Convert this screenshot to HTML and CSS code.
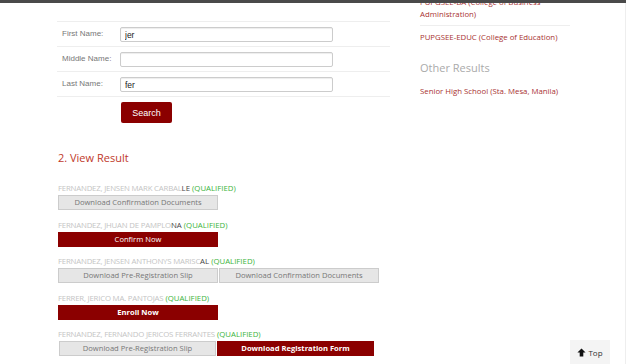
FILE: index.html
```html
<!Doctype html>
<html lang='en'>
<head>
    <meta charset='utf-8'>
    <meta name='viewport' content='width=device-width, initial-scale=1'>
    <title>Search Result</title>
    <link rel="stylesheet" href="styles.css">
</head>
<body>
    <div class='topbar'></div>
    <div class='page'>
        <div class='main'>
            <table class='search-form'>
                <tr>
                    <td class='label'>First Name:</td>
                    <td><input class='field' value='jer'/></td>
                </tr>
                <tr>
                    <td class='label'>Middle Name:</td>
                    <td><input class='field' value=''/></td>
                </tr>
                <tr>
                    <td class='label'>Last Name:</td>
                    <td><input class='field' value='fer'/></td>
                </tr>
                <tr>
                    <td></td>
                    <td><button class='search-btn'>Search</button></td>
                </tr>
            </table>

            <h3 class='step'>2. View Result</h3>

            <div class='result'>
                <div class='name'><span class='blur'>FERNANDEZ, JENSEN MARK CARBAL</span><span class='tail'>LE</span> <span class='ok'>(QUALIFIED)</span></div>
                <div class='actions'>
                    <a class='btn gray'>Download Confirmation Documents</a>
                </div>
            </div>
            <div class='result'>
                <div class='name'><span class='blur'>FERNANDEZ, JHUAN DE PAMPLO</span><span class='tail'>NA</span> <span class='ok'>(QUALIFIED)</span></div>
                <div class='actions'>
                    <a class='btn red'>Confirm Now</a>
                </div>
            </div>
            <div class='result'>
                <div class='name'><span class='blur'>FERNANDEZ, JENSEN ANTHONYS MARISC</span><span class='tail'>AL</span> <span class='ok'>(QUALIFIED)</span></div>
                <div class='actions'>
                    <a class='btn gray'>Download Pre-Registration Slip</a>
                    <a class='btn gray'>Download Confirmation Documents</a>
                </div>
            </div>
            <div class='result'>
                <div class='name'><span class='blur'>FERRER, JERICO MA. PANTOJAS</span> <span class='ok'>(QUALIFIED)</span></div>
                <div class='actions'>
                    <a class='btn red bold'>Enroll Now</a>
                </div>
            </div>
            <div class='result'>
                <div class='name'><span class='blur'>FERNANDEZ, FERNANDO JERICOS FERRANTES</span> <span class='ok'>(QUALIFIED)</span></div>
                <div class='actions'>
                    <a class='btn gray narrow'>Download Pre-Registration Slip</a>
                    <a class='btn red bold narrow'>Download Registration Form</a>
                </div>
            </div>
        </div>

        <div class='side'>
            <ul class='links'>
                <li><a>PUPGSEE-BA (College of Business Administration)</a></li>
                <li><a>PUPGSEE-EDUC (College of Education)</a></li>
            </ul>
            <h4 class='side-title'>Other Results</h4>
            <ul class='links plain'>
                <li><a>Senior High School (Sta. Mesa, Manila)</a></li>
            </ul>
        </div>
    </div>

    <a class='to-top'>
        <svg width='9' height='9' viewBox='0 0 10 10'><path d='M5 0.5 L9.5 5 L7 5 L7 9.5 L3 9.5 L3 5 L0.5 5 Z' fill='#111'/></svg>
        Top
    </a>
</body>
</html>
```
FILE: styles.css
```css
html,
body {
    margin: 0;
    font-family: "Open Sans", "Noto Sans", sans-serif;
    background-color: #ffffff;
    color: #333333;
}

/* fixed header edge */
.topbar {
    position: fixed;
    top: 0;
    left: 0;
    right: 0;
    height: 3px;
    background-color: #4a4a4a;
    z-index: 10;
}

.page {
    display: flex;
    gap: 30px;
    padding-left: 57px;
    margin-top: -5px;
    border-right: 1px solid #eeeeee;
    min-height: 369px;
    box-sizing: border-box;
}

.main {
    width: 333px;
    padding-top: 26px;
}

.search-form {
    width: 100%;
    border-collapse: collapse;
}
.search-form td {
    border-top: 1px solid #eeeeee;
    padding: 5px 0 4px 0;
    height: 15px;
    vertical-align: top;
}
.search-form tr:last-child td {
    padding-top: 5px;
    padding-bottom: 0;
}
.search-form .label {
    width: 58px;
    padding-left: 5px;
    font-family: "Liberation Sans", Arial, sans-serif;
    font-size: 8px;
    color: #777777;
    line-height: 14px;
}
.field {
    display: block;
    width: 213px;
    height: 15px;
    box-sizing: border-box;
    border: 1px solid #cccccc;
    border-radius: 2px;
    padding: 0 4px;
    font-family: "Liberation Sans", Arial, sans-serif;
    font-size: 8.5px;
    color: #222222;
    box-shadow: inset 0 1px 1px rgba(0, 0, 0, 0.075);
}
.search-btn {
    display: block;
    width: 51px;
    height: 21px;
    border: 0;
    border-radius: 2px;
    background-color: #8b0000;
    color: #ffffff;
    font-family: "Liberation Sans", Arial, sans-serif;
    font-size: 9px;
    margin-left: 1px;
}

.step {
    margin: 28px 0 17px 1px;
    font-weight: normal;
    font-size: 11px;
    line-height: 14px;
    color: #c0392b;
}

.result {
    margin-bottom: 8.5px;
}
.name {
    font-size: 7.8px;
    line-height: 12px;
    white-space: nowrap;
    margin-left: 1px;
}
.blur {
    color: #c4c4c4;
    letter-spacing: -0.2px;
}
.tail {
    color: #444444;
}
.ok {
    color: #3cb43c;
}
.actions {
    display: flex;
    gap: 1px;
    margin-top: 1px;
    margin-left: 1px;
}
.btn {
    display: block;
    width: 160px;
    height: 15px;
    box-sizing: border-box;
    text-align: center;
    font-size: 7.6px;
    line-height: 13px;
    border: 1px solid #cccccc;
}
.btn.gray {
    background-color: #e6e6e6;
    color: #777777;
}
.btn.red {
    background-color: #8b0000;
    border-color: #8b0000;
    color: #ffffff;
}
.btn.bold {
    font-weight: bold;
}
.btn.narrow {
    width: 157px;
}
.actions .narrow:first-child {
    margin-left: 1px;
}

.side {
    width: 150px;
}
.links {
    list-style-type: none;
    margin: 0;
    padding: 0;
}
.links li {
    font-size: 7.8px;
    line-height: 12px;
    padding: 5px 0 5px 0;
    border-bottom: 1px solid #eeeeee;
    color: #a83232;
}
.links li:first-child {
    padding-top: 1px;
}
.links li:last-child {
    border-bottom: 0;
}
.links.plain li {
    padding: 0;
}
.side-title {
    margin: 12px 0 10px 0;
    font-weight: normal;
    font-size: 11px;
    line-height: 15px;
    color: #aaaaaa;
}

/* floating back-to-top */
.to-top {
    position: fixed;
    left: 570px;
    top: 340px;
    width: 40px;
    height: 26px;
    background-color: #f4f4f4;
    font-size: 8px;
    color: #333333;
    display: flex;
    align-items: center;
    justify-content: center;
    gap: 2px;
    padding-bottom: 2px;
    box-sizing: border-box;
}
```
